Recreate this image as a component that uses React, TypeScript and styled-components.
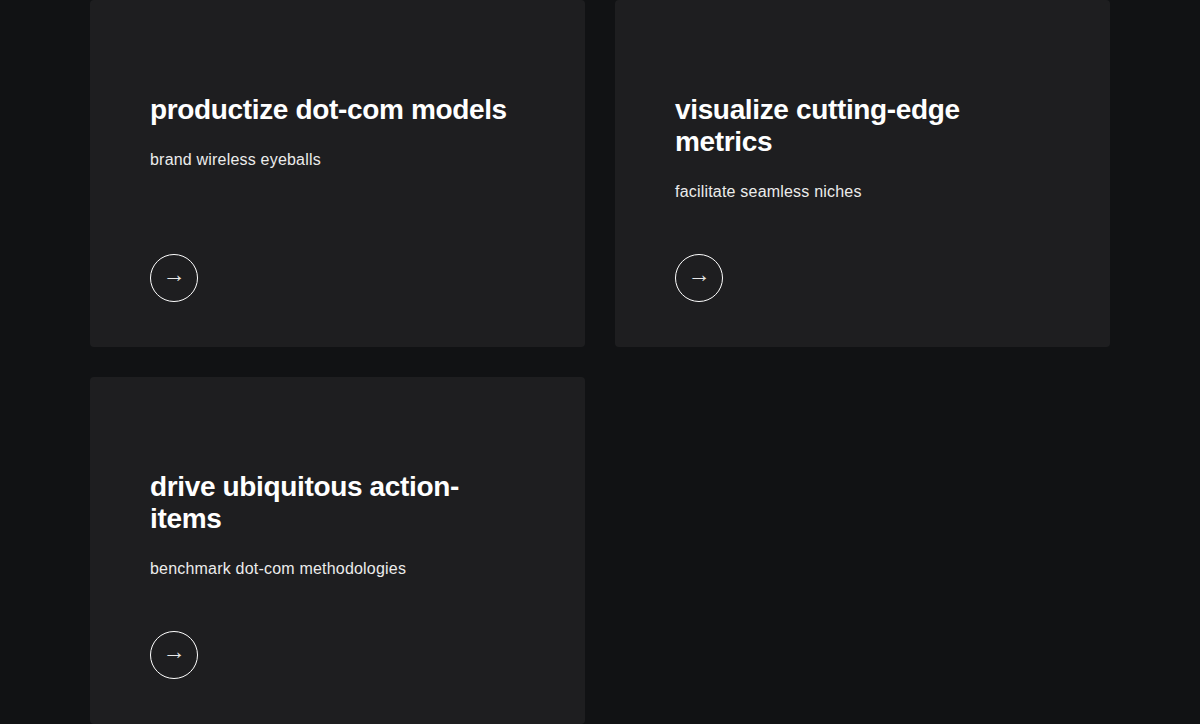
import { FC } from 'react';
import styled, { createGlobalStyle } from 'styled-components';

const GlobalStyle = createGlobalStyle`
  html, body {
    margin: 0;
    padding: 0;
    background: #111214;
    font-family: 'Liberation Sans', Arial, sans-serif;
  }
`;

const Grid = styled.section`
  width: 1020px;
  margin: 0 auto;
  display: grid;
  grid-template-columns: 1fr 1fr;
  gap: 30px;
`;

const Card = styled.article`
  background: #1e1e20;
  border-radius: 4px;
  height: 347px;
  box-sizing: border-box;
  padding: 94px 60px 45px;
  display: flex;
  flex-direction: column;
`;

const Title = styled.h3`
  margin: 0 0 22px;
  color: #ffffff;
  font-size: 28px;
  line-height: 32px;
  font-weight: 700;
  letter-spacing: -0.35px;
  max-width: 370px;
`;

const Text = styled.p`
  margin: 0;
  color: #ececec;
  font-size: 16px;
  line-height: 24px;
  letter-spacing: 0.2px;
`;

const ArrowButton = styled.button`
  margin-top: auto;
  width: 48px;
  height: 48px;
  border-radius: 50%;
  border: 1px solid #ffffff;
  background: none;
  color: #e8e8e8;
  font-family: 'Liberation Sans', Arial, sans-serif;
  font-size: 23px;
  line-height: 1;
  display: flex;
  align-items: center;
  justify-content: center;
  padding: 0 0 8px;
  cursor: pointer;
`;

const items = [
  { title: 'productize dot-com models', text: 'brand wireless eyeballs' },
  { title: 'visualize cutting-edge metrics', text: 'facilitate seamless niches' },
  { title: 'drive ubiquitous action-items', text: 'benchmark dot-com methodologies' }
];

const App: FC = () => (
  <>
    <GlobalStyle />
    <Grid>
      {items.map((item) => (
        <Card key={item.title}>
          <Title>{item.title}</Title>
          <Text>{item.text}</Text>
          <ArrowButton aria-label="more">→</ArrowButton>
        </Card>
      ))}
    </Grid>
  </>
);

export default App;
